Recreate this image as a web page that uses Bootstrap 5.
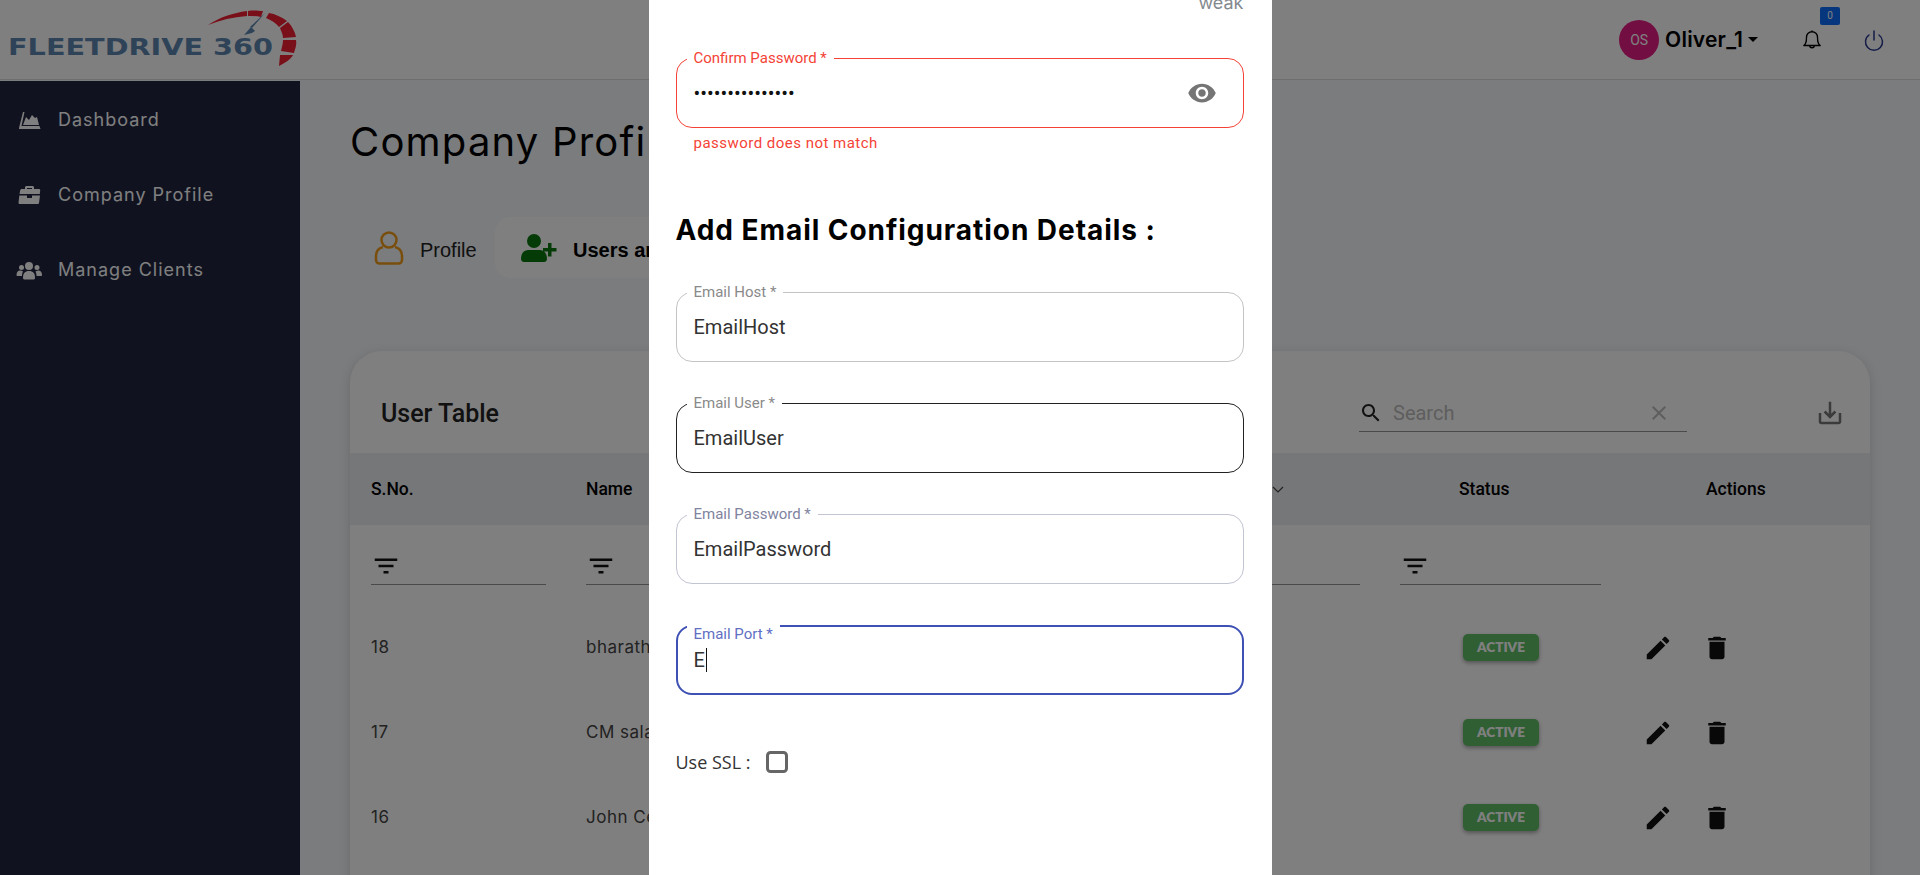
<!DOCTYPE html>
<html lang="en">

<head>
    <meta charset="UTF-8">
    <meta name="viewport" content="width=device-width, initial-scale=1.0">
    <title>Fleetdrive 360 - Company Profile</title>
    <link href="https://cdn.jsdelivr.net/npm/bootstrap@5.3.3/dist/css/bootstrap.min.css" rel="stylesheet">
    <script src="https://cdn.jsdelivr.net/npm/bootstrap@5.3.3/dist/js/bootstrap.bundle.min.js"></script>

    <style>
        body {
            font-family: "Inter", "Liberation Sans", sans-serif;
            background: #f6f8fb;
            height: 100vh;
            overflow: hidden;
        }

        .top-bar {
            height: 80px;
            background: #fff;
            border-bottom: 1px solid #ddd;
        }

        .logo-svg {
            width: 310px;
            height: 80px;
        }

        .avatar-dot {
            width: 40px;
            height: 40px;
            background: #e41c84;
            color: #fff;
            font: 14px "Roboto", sans-serif;
        }

        .user-name {
            font-size: 21px;
            font-weight: 600;
            color: #000;
            letter-spacing: .2px;
            margin: 0 5px 0 6px;
        }

        .user-caret {
            border-left: 5px solid transparent;
            border-right: 5px solid transparent;
            border-top: 5px solid #000;
        }

        .bell-wrap {
            width: 22px;
            height: 24px;
            margin-left: 43px;
        }

        .bell-count {
            top: -21px;
            left: 19px;
            width: 20px;
            height: 18px;
            background: #0d6efd;
            color: #fff;
            font: 10px/18px "Roboto", sans-serif;
            border-radius: 2px;
        }

        .body-wrap {
            height: calc(100vh - 80px);
            overflow: hidden;
        }

        .side-nav {
            width: 300px;
            background: #20243e;
            margin-top: 1px;
            padding-top: 1px;
        }

        .side-item {
            height: 75px;
            color: #fff;
            font-size: 18px;
            letter-spacing: 1px;
            padding-left: 16px;
        }

        .side-item svg {
            width: 26px;
            height: 22px;
            margin-right: 16px;
        }

        .page-main {
            padding: 38px 50px 0 50px;
            min-width: 0;
        }

        .page-title {
            font-size: 40px;
            font-weight: 400;
            line-height: 48px;
            color: #000;
            letter-spacing: 1.2px;
            margin: 0;
        }

        .tab-row {
            margin-top: 51px;
            height: 61px;
        }

        .tab-plain {
            padding-left: 24px;
            width: 145px;
            font: 20px "Liberation Sans", sans-serif;
            color: #222;
        }

        .tab-plain span,
        .tab-on span {
            padding-top: 5px;
        }

        .tab-on {
            padding-left: 26px;
            width: 400px;
            background: #fff;
            border-radius: 16px;
            font: 700 20px "Liberation Sans", sans-serif;
            color: #000;
        }

        .user-card {
            margin-top: 73px;
            height: 600px;
            border: 0;
            border-radius: 32px 32px 0 0;
            box-shadow: 0 3px 12px rgba(0, 0, 0, .15);
            overflow: hidden;
        }

        .tool-bar {
            height: 102px;
            padding: 22px 0 0 31px;
        }

        .tool-title {
            font: 500 25px "Roboto", sans-serif;
            color: #222;
        }

        .search-box {
            width: 328px;
            height: 48px;
            margin-left: auto;
            margin-right: 128px;
            margin-top: auto;
            margin-bottom: 21px;
            border-bottom: 1px solid #949494;
            padding: 10px 0 0 0;
            color: #bdbdbd;
            font: 20px "Roboto", sans-serif;
        }

        .search-word {
            margin-left: 10px;
        }

        .user-table {
            table-layout: fixed;
            width: 100%;
            margin: 0;
            font-size: 17px;
            letter-spacing: .5px;
            color: #444;
        }

        .user-table td,
        .user-table th {
            border: 0;
            padding: 0 0 0 20px;
            background: transparent;
            vertical-align: middle;
            white-space: nowrap;
            overflow: hidden;
        }

        .user-table td:first-child,
        .user-table th:first-child {
            padding-left: 21px;
        }

        .user-table thead tr.head-row {
            height: 72px;
            background: #edeef1;
        }

        .user-table th {
            font: 500 17.500px "Roboto", sans-serif;
            letter-spacing: 0;
            color: #000;
        }

        .user-table tr.filter-row {
            height: 80px;
        }

        .user-table tr.data-row {
            height: 85px;
        }

        .filter-line {
            height: 47px;
            border-bottom: 1px solid #949494;
            margin-top: -8px;
            padding: 13px 0 0 0;
            margin-right: 20px;
        }

        .status-pill {
            width: 76px;
            height: 27px;
            font: 800 13.500px/27px "Lato", sans-serif;
            letter-spacing: 0;
            background: #5fbf67;
            color: #fff;
            border-radius: 5px;
            box-shadow: 0 2px 4px rgba(0, 0, 0, .35);
            text-align: center;
        }

        .form-dialog {
            width: 623px;
            max-width: 623px;
            height: 875px;
            margin: 0 auto;
        }

        .form-sheet {
            height: 875px;
            border: 0;
            border-radius: 0;
            padding: 0 28px 0 27px;
            overflow: hidden;
        }

        .weak-text {
            margin-top: -9px;
            height: 24px;
            font: 18px/24px "Inter", sans-serif;
            color: #84898f;
            text-align: right;
        }

        .mui-field {
            height: 70px;
            border: 1px solid #c4c4c4;
            border-radius: 16px;
            padding-left: 17px;
            margin-bottom: 41px;
        }

        .mui-label {
            position: absolute;
            top: -11px;
            left: 10px;
            padding: 0 7px;
            background: #fff;
            font: 15px/20px "Roboto", sans-serif;
            color: #8a8a8a;
        }

        .mui-value {
            border: 0;
            padding: 0;
            height: 100%;
            width: 100%;
            background: transparent;
            font: 20px "Roboto", sans-serif;
            color: #333;
            outline: 0;
        }

        .field-error {
            border-color: #f44336;
            margin-top: 43px;
            margin-bottom: 0;
        }

        .field-error .mui-label {
            color: #f44336;
        }

        .field-error .mui-value {
            color: #111;
        }

        .field-hard {
            border-color: #222;
        }

        .field-soft {
            border-color: #c2c4d2;
        }

        .field-soft .mui-label {
            color: #7f84a0;
        }

        .field-focus {
            border: 2px solid #3f51b5;
            margin-bottom: 0;
            padding-left: 16px;
        }

        .field-focus .mui-label {
            top: -2px;
            left: 9px;
            color: #5f6fc4;
            line-height: 18px;
        }

        .type-caret {
            position: absolute;
            left: 28px;
            top: 21px;
            height: 24px;
            border-left: 1px solid #111;
        }

        .helper-text {
            font: 15px/20px "Roboto", sans-serif;
            color: #f44336;
            letter-spacing: .48px;
            padding-left: 18px;
            margin-top: 5px;
        }

        .config-title {
            font-size: 28px;
            font-weight: 700;
            line-height: 36px;
            color: #000;
            margin: 59px 0 44px;
            letter-spacing: .95px;
        }

        .ssl-row {
            margin-top: 55px;
            color: #333;
            font: 400 18px "Open Sans", sans-serif;
        }

        .ssl-check {
            width: 22px;
            height: 22px;
            margin: 0 0 0 15px;
            border: 3px solid #666;
            border-radius: 3px;
        }
    </style>

</head>

<body>

    <header class="top-bar d-flex align-items-center">
        <svg class="logo-svg" viewBox="0 0 310 80">
            <text x="8" y="54.500" textLength="265" lengthAdjust="spacingAndGlyphs" font-family="DejaVu Sans" font-weight="700" font-size="23" fill="#5f87b0">FLEETDRIVE 360</text>
            <path d="M208 25C220 17 233 13 247 11L247 16C233 17 220 20 208 25Z" fill="#f01f33" />
            <path d="M248 11C254 10 259 11 263 11L261 17C257 16 252 16 248 16Z" fill="#f01f33" />
            <path d="M269 13C275 14 282 17 287 21L279 27C276 23 271 20 266 18Z" fill="#f01f33" />
            <path d="M288 22C292 26 295 32 296 37L283 38C283 34 281 31 280 28Z" fill="#f01f33" />
            <path d="M296 40C297 45 295 49 294 53L281 51C282 47 283 43 283 40Z" fill="#f01f33" />
            <path d="M293 55C291 59 285 63 279 66L280 55Z" fill="#f01f33" />
            <path d="M265 13L252 28L250 27Z" fill="#5f87b0" />
            <path d="M244 35L251 27L255 31L252 33Z" fill="#5f87b0" />
        </svg>
        <div class="d-flex align-items-center ms-auto">
            <div class="avatar-dot rounded-circle d-flex align-items-center justify-content-center">OS</div>
            <span class="user-name">Oliver_1</span>
            <span class="user-caret"></span>
            <div class="bell-wrap position-relative">
                <svg class="d-block" width="22" height="24" viewBox="0 0 24 24" fill="none" stroke="#000" stroke-width="1.500" stroke-linejoin="round">
                    <path d="M12 3a6 6 0 0 0-6 6c0 5-1 8-3 9h18c-2-1-3-4-3-9a6 6 0 0 0-6-6zM12 1.500v1.500M9.500 18a2.500 2.500 0 0 0 5 0" />
                </svg>
                <span class="bell-count position-absolute text-center">0</span>
            </div>
            <svg width="24" height="24" viewBox="0 0 24 24" fill="none" stroke="#2a3a90" stroke-width="1.500" stroke-linecap="round" style="margin:2px 34px 0 39px">
                <path d="M7 6a8.500 8.500 0 1 0 10 0M12 2v9" />
            </svg>
        </div>
    </header>

    <div class="body-wrap d-flex">
        <nav class="side-nav flex-shrink-0">
            <div class="side-item d-flex align-items-center">
                <svg viewBox="0 0 26 22" fill="#fff">
                    <path d="M3 19L7 3h1.500L5.500 17h18l1 3H3z" />
                    <path d="M7 16L10 8l3 3 3-5 3 3 2-1 2 8z" />
                </svg>
                <span>Dashboard</span>
            </div>
            <div class="side-item d-flex align-items-center">
                <svg viewBox="0 0 26 22" fill="#fff">
                    <path d="M9 5V3.500C9 2.700 9.700 2 10.500 2h6c.8 0 1.500.7 1.500 1.500V5h5c.8 0 1.300.6 1.200 1.300L23.800 10H3.500l.7-3.700C4.300 5.600 5 5 5.800 5zM11 5h5V4h-5z" />
                    <path d="M3.300 11.500H11V14h5v-2.500h8L23 19c-.1.700-.8 1-1.500 1H4c-.9 0-1.600-.4-1.500-1.200z" />
                </svg>
                <span>Company Profile</span>
            </div>
            <div class="side-item d-flex align-items-center">
                <svg viewBox="0 0 26 22" fill="#fff">
                    <circle cx="13" cy="7" r="4" />
                    <circle cx="5.500" cy="8.500" r="2.500" />
                    <circle cx="21" cy="8.500" r="2.500" />
                    <path d="M7 19c0-5 2-7 6-7s6 2 6 7c0 1-1 1.500-2 1.500H9c-1 0-2-.5-2-1.500z" />
                    <path d="M6 17H1.500C.8 17 .5 16.500 .5 16c0-3 1.500-4.500 3.500-4.500 1 0 2 .3 3 1-.8 1.200-1 3-1 4.500zM20.500 17H25c.7 0 1-.5 1-1 0-3-1.500-4.500-3.500-4.500-1 0-2 .3-3 1 .8 1.200 1 3 1 4.500z" />
                </svg>
                <span>Manage Clients</span>
            </div>
        </nav>

        <main class="page-main flex-grow-1">
            <h1 class="page-title">Company Profile</h1>

            <div class="tab-row d-flex">
                <div class="tab-plain d-flex align-items-center gap-3">
                    <svg width="30" height="36" viewBox="0 0 30 36" fill="none" stroke="#f29d1b" stroke-width="2.500">
                        <circle cx="15" cy="10" r="7.500" />
                        <path d="M9 17c-4 1-7 4-7 9v4c0 2 1.500 3.500 3.500 3.500h19c2 0 3.500-1.500 3.500-3.500v-4c0-5-3-8-7-9" />
                    </svg>
                    <span>Profile</span>
                </div>
                <div class="tab-on d-flex align-items-center gap-3">
                    <svg width="36" height="28" viewBox="0 0 36 28" fill="#0a760e">
                        <circle cx="13" cy="7" r="7" />
                        <path d="M0 25c0-6 3-9 8-9h10c5 0 8 3 8 9 0 1.500-1 3-3 3H3c-2 0-3-1.500-3-3z" />
                        <path d="M22 14h5v-5h3.500v5h5v3.500h-5v5H27v-5h-5z" />
                    </svg>
                    <span>Users and Email</span>
                </div>
            </div>

            <div class="card user-card">
                <div class="tool-bar d-flex align-items-center">
                    <span class="tool-title">User Table</span>
                    <div class="search-box d-flex align-items-center position-relative">
                        <svg width="24" height="24" viewBox="0 0 24 24" fill="#222">
                            <path d="M15.500 14h-.79l-.28-.27C15.410 12.590 16 11.110 16 9.500 16 5.910 13.090 3 9.500 3S3 5.910 3 9.500 5.910 16 9.500 16c1.610 0 3.090-.59 4.230-1.570l.27.28v.79l5 4.990L20.490 19l-4.990-5zm-6 0C7.010 14 5 11.990 5 9.500S7.010 5 9.500 5 14 7.010 14 9.500 11.990 14 9.500 14z" />
                        </svg>
                        <span class="search-word flex-grow-1">Search</span>
                        <svg class="me-3" width="24" height="24" viewBox="0 0 24 24" fill="#bdbdbd">
                            <path d="M19 6.410L17.590 5 12 10.590 6.410 5 5 6.410 10.590 12 5 17.590 6.410 19 12 13.410 17.590 19 19 17.590 13.410 12z" />
                        </svg>
                    </div>
                    <svg width="30" height="30" viewBox="0 0 24 24" fill="#777" style="margin-right:25px">
                        <path d="M19 12v7H5v-7H3v7c0 1.100.9 2 2 2h14c1.100 0 2-.9 2-2v-7h-2zm-6 .67l2.590-2.580L17 11.500l-5 5-5-5 1.410-1.410L11 12.670V3h2z" />
                    </svg>
                </div>

                <table class="table user-table">
                    <colgroup>
                        <col style="width:216px">
                        <col style="width:215px">
                        <col style="width:320px">
                        <col style="width:279px">
                        <col style="width:260px">
                        <col>
                    </colgroup>
                    <thead>
                        <tr class="head-row">
                            <th>S.No.</th>
                            <th>Name</th>
                            <th>Email</th>
                            <th class="text-end" style="padding-right:96px">
                                <svg width="12" height="12" viewBox="0 0 12 12" fill="none" stroke="#444" stroke-width="1.200"><path d="M1 3l5 5 5-5" /></svg>
                            </th>
                            <th style="padding-left:79px">Status</th>
                            <th style="padding-left:66px">Actions</th>
                        </tr>
                        <tr class="filter-row">
                            <td><div class="filter-line"><svg width="30" height="30" viewBox="0 0 24 24" fill="#111"><path d="M10 18h4v-2h-4v2zM3 6v2h18V6H3zm3 7h12v-2H6v2z" /></svg></div></td>
                            <td><div class="filter-line"><svg width="30" height="30" viewBox="0 0 24 24" fill="#111"><path d="M10 18h4v-2h-4v2zM3 6v2h18V6H3zm3 7h12v-2H6v2z" /></svg></div></td>
                            <td><div class="filter-line"></div></td>
                            <td><div class="filter-line"></div></td>
                            <td><div class="filter-line" style="margin-right:39px"><svg width="30" height="30" viewBox="0 0 24 24" fill="#111"><path d="M10 18h4v-2h-4v2zM3 6v2h18V6H3zm3 7h12v-2H6v2z" /></svg></div></td>
                            <td></td>
                        </tr>
                    </thead>
                    <tbody id="user-rows"></tbody>
                </table>
            </div>
        </main>
    </div>

    <div class="modal-backdrop show"></div>

    <div class="modal d-block">
        <div class="modal-dialog form-dialog">
            <div class="modal-content form-sheet">
                <div class="weak-text">weak</div>

                <div class="mui-field field-error position-relative d-flex align-items-center">
                    <label class="mui-label">Confirm Password *</label>
                    <input class="mui-value" type="password" value="passwordconfirm">
                    <svg class="flex-shrink-0" width="30" height="30" viewBox="0 0 24 24" fill="#757575" style="margin-right:26px">
                        <path d="M12 4.500C7 4.500 2.730 7.610 1 12c1.730 4.390 6 7.500 11 7.500s9.270-3.110 11-7.500c-1.730-4.390-6-7.500-11-7.500zM12 17c-2.760 0-5-2.240-5-5s2.240-5 5-5 5 2.240 5 5-2.240 5-5 5zm0-8c-1.660 0-3 1.340-3 3s1.340 3 3 3 3-1.340 3-3-1.340-3-3-3z" />
                    </svg>
                </div>
                <div class="helper-text">password does not match</div>

                <h2 class="config-title">Add Email Configuration Details :</h2>

                <div class="mui-field position-relative">
                    <label class="mui-label">Email Host *</label>
                    <input class="mui-value" value="EmailHost">
                </div>
                <div class="mui-field field-hard position-relative">
                    <label class="mui-label">Email User *</label>
                    <input class="mui-value" value="EmailUser">
                </div>
                <div class="mui-field field-soft position-relative">
                    <label class="mui-label">Email Password *</label>
                    <input class="mui-value" value="EmailPassword">
                </div>
                <div class="mui-field field-focus position-relative">
                    <label class="mui-label">Email Port *</label>
                    <input class="mui-value" value="E">
                    <span class="type-caret"></span>
                </div>

                <div class="ssl-row d-flex align-items-center">
                    <span>Use SSL :</span>
                    <input class="form-check-input ssl-check" type="checkbox">
                </div>
            </div>
        </div>
    </div>

    <script>
        const users = [
            { id: 18, name: 'bharath' },
            { id: 17, name: 'CM salam' },
            { id: 16, name: 'John Cena' }
        ];

        const rows = document.getElementById('user-rows');
        users.forEach(user => {
            rows.innerHTML += `
                <tr class="data-row">
                    <td>${user.id}</td>
                    <td>${user.name}</td>
                    <td></td>
                    <td></td>
                    <td style="padding-left:83px"><div class="status-pill">ACTIVE</div></td>
                    <td style="padding-left:3px">
                        <div class="d-flex" style="gap:29px">
                            <svg width="30" height="30" viewBox="0 0 24 24" fill="#111"><path d="M3 17.250V21h3.750L17.810 9.940l-3.750-3.750L3 17.250zM20.710 7.040c.39-.39.39-1.020 0-1.410l-2.340-2.340c-.39-.39-1.020-.39-1.410 0l-1.830 1.830 3.750 3.750 1.830-1.830z" /></svg>
                            <svg width="30" height="30" viewBox="0 0 24 24" fill="#111"><path d="M6 19c0 1.100.9 2 2 2h8c1.100 0 2-.9 2-2V7H6v12zM19 4h-3.500l-1-1h-5l-1 1H5v2h14V4z" /></svg>
                        </div>
                    </td>
                </tr>`;
        });
    </script>
</body>

</html>
